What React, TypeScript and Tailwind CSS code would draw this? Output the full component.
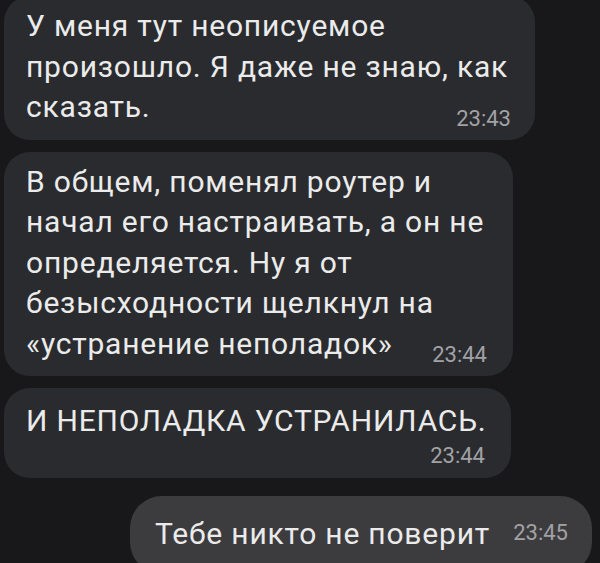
import React from "react";

const Time = ({ t }: { t: string }) => (
  <span className="shrink-0 text-[22px] leading-[19px] tracking-normal text-[#a2a2a6]">{t}</span>
);

const App = () => {
  return (
    <div
      className="flex h-[563px] w-[600px] flex-col overflow-hidden bg-[#18181b] text-[#ebebeb]"
      style={{ fontFamily: "Roboto, 'Noto Sans', sans-serif" }}
    >
      {/* incoming */}
      <div className="ml-[4px] mt-[-4px] w-[531px] rounded-[26px] bg-[#2a2b2e] pb-[12px] pl-[22px] pr-[24px] pt-[10px] text-[30px] leading-[40.5px] tracking-[0.8px] whitespace-nowrap">
        <div>У меня тут неописуемое</div>
        <div>произошло. Я даже не знаю, как</div>
        <div className="flex items-end justify-between">
          <span>сказать.</span>
          <Time t="23:43" />
        </div>
      </div>

      <div className="ml-[4px] mt-[12px] w-[509px] rounded-[26px] bg-[#2a2b2e] pb-[12px] pl-[22px] pr-[26px] pt-[10px] text-[30px] leading-[40.5px] tracking-[0.8px] whitespace-nowrap">
        <div>В общем, поменял роутер и</div>
        <div>начал его настраивать, а он не</div>
        <div>определяется. Ну я от</div>
        <div>безысходности щелкнул на</div>
        <div className="flex items-end justify-between">
          <span>«устранение неполадок»</span>
          <Time t="23:44" />
        </div>
      </div>

      <div className="ml-[4px] mt-[12px] flex w-[507px] flex-col rounded-[26px] bg-[#2a2b2e] pb-[13px] pl-[22px] pr-[26px] pt-[13px] text-[30px] leading-[40.5px] tracking-[0.8px] whitespace-nowrap">
        <div>И НЕПОЛАДКА УСТРАНИЛАСЬ.</div>
        <div className="mt-[4px] flex justify-end">
          <Time t="23:44" />
        </div>
      </div>

      {/* outgoing */}
      <div className="ml-auto mr-[8px] mt-[18px] flex w-[462px] items-end justify-between rounded-[32px] bg-[#3c3c3f] pb-[20px] pl-[25px] pr-[24px] pt-[14px] text-[30px] leading-[40.5px] tracking-[0.8px] whitespace-nowrap">
        <span>Тебе никто не поверит</span>
        <span className="mb-[4px]">
          <Time t="23:45" />
        </span>
      </div>
    </div>
  );
};

export default App;
